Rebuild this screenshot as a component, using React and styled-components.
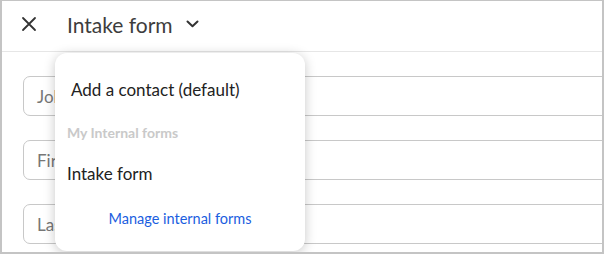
import styled, { createGlobalStyle } from "styled-components";

//global reset
const GlobalStyle = createGlobalStyle`
  html, body {
    margin: 0;
    padding: 0;
    background: #ffffff;
  }
  body {
    font-family: Lato, "Noto Sans", Arial, sans-serif;
  }
`;

//styles
const Frame = styled.div`
  position: relative;
  box-sizing: border-box;
  width: 604px;
  height: 254px;
  border: 2px solid #c4c4c4;
  border-top-width: 1px;
  overflow: hidden;
  background: #fff;
`;

const Header = styled.header`
  box-sizing: border-box;
  display: flex;
  align-items: center;
  height: 51px;
  padding: 0 0 4px 17px;
  border-bottom: 1px solid #e6e6e6;
`;

const IconButton = styled.button`
  display: flex;
  align-items: center;
  justify-content: center;
  width: 20px;
  height: 20px;
  padding: 0;
  border: none;
  background: transparent;
  color: #333;
`;

const Title = styled.button`
  display: flex;
  align-items: center;
  gap: 13px;
  margin-left: 28px;
  padding: 0;
  border: none;
  background: transparent;
  font-family: inherit;
  font-size: 21px;
  color: #3d3d3d;
`;

const Body = styled.div`
  display: flex;
  flex-direction: column;
  gap: 24px;
  padding: 24px 0 0 21px;
`;

const Input = styled.div`
  box-sizing: border-box;
  width: 640px;
  height: 40px;
  display: flex;
  align-items: center;
  padding-left: 13px;
  border: 1px solid #c8c8c8;
  border-radius: 7px;
  font-size: 17px;
  color: #777;
`;

const Menu = styled.div`
  position: absolute;
  left: 53px;
  top: 52px;
  width: 250px;
  height: 198px;
  box-sizing: border-box;
  background: #fff;
  border-radius: 12px;
  box-shadow: 0 2px 12px rgba(0, 0, 0, 0.22);
  display: flex;
  flex-direction: column;
  padding-top: 25px;
`;

const MenuItem = styled.div`
  padding-left: ${({ $indent }) => $indent}px;
  margin-top: ${({ $top }) => $top || 0}px;
  font-size: 17px;
  color: #222;
  line-height: 24px;
`;

const MenuLabel = styled.div`
  padding-left: 12px;
  margin-top: 23px;
  font-size: 14px;
  font-weight: 700;
  color: #c9c9c9;
  line-height: 16px;
`;

const MenuLink = styled.a`
  margin-top: 23px;
  text-align: center;
  font-size: 14.5px;
  color: #1b5ee0;
  text-decoration: none;
  line-height: 20px;
`;

//component
export default function App() {
  return (
    <>
      <GlobalStyle />
      <Frame>
        <Header>
          <IconButton aria-label="close">
            <svg width="16" height="16" viewBox="0 0 16 16">
              <path
                d="M2 2 L14 14 M14 2 L2 14"
                stroke="currentColor"
                strokeWidth="1.8"
                strokeLinecap="round"
              />
            </svg>
          </IconButton>
          <Title>
            Intake form
            <svg width="13" height="8" viewBox="0 0 13 8">
              <path
                d="M1.5 1.5 L6.5 6.3 L11.5 1.5"
                fill="none"
                stroke="#333"
                strokeWidth="2"
                strokeLinecap="round"
                strokeLinejoin="round"
              />
            </svg>
          </Title>
        </Header>
        <Body>
          {["John", "First name", "Last name"].map((p) => (
            <Input key={p}>{p}</Input>
          ))}
        </Body>
        <Menu>
          <MenuItem $indent={16}>Add a contact (default)</MenuItem>
          <MenuLabel>My Internal forms</MenuLabel>
          <MenuItem $indent={12} $top={21}>
            Intake form
          </MenuItem>
          <MenuLink href="#">Manage internal forms</MenuLink>
        </Menu>
      </Frame>
    </>
  );
}
